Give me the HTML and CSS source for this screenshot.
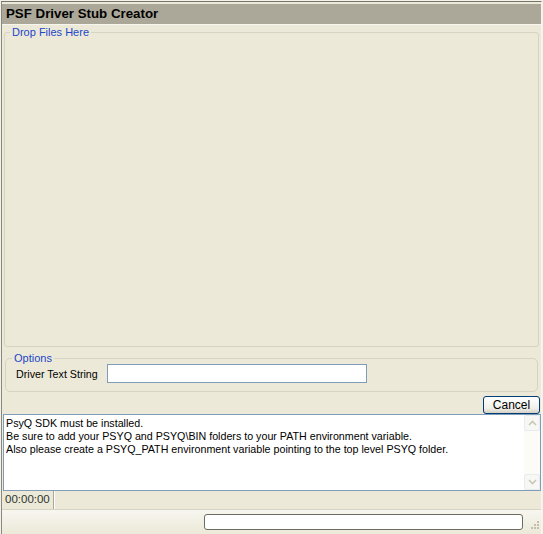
FILE: index.html
```html
<!DOCTYPE html>
<html>
<head>
<meta charset="utf-8">
<link rel="stylesheet" href="styles.css">
</head>
<body>
<div class="window">
  <div class="titlebar">PSF Driver Stub Creator</div>
  <fieldset class="group drop">
    <legend class="legend drop-legend">Drop Files Here</legend>
  </fieldset>
  <fieldset class="group options">
    <legend class="legend opt-legend">Options</legend>
    <div class="opt-row">
      <label class="opt-label">Driver Text String</label>
      <div class="textbox"></div>
    </div>
  </fieldset>
  <div class="btn-row">
    <div class="btn">Cancel</div>
  </div>
  <div class="log">
    <div class="log-text">PsyQ SDK must be installed.<br>Be sure to add your PSYQ and PSYQ\BIN folders to your PATH environment variable.<br>Also please create a PSYQ_PATH environment variable pointing to the top level PSYQ folder.</div>
    <div class="scroll">
      <div class="sbtn"><svg width="9" height="6" viewBox="0 0 9 6"><path d="M1 5 L4.5 1.5 L8 5" fill="none" stroke="#c9c7ba" stroke-width="1.6"/></svg></div>
      <div class="strack"></div>
      <div class="sbtn"><svg width="9" height="6" viewBox="0 0 9 6"><path d="M1 1 L4.5 4.5 L8 1" fill="none" stroke="#c9c7ba" stroke-width="1.6"/></svg></div>
    </div>
  </div>
  <div class="status">
    <div class="panel time">00:00:00</div>
    <div class="panel fill"></div>
  </div>
  <div class="bottom">
    <div class="progress"></div>
    <svg class="grip" width="11" height="11" viewBox="0 0 11 11">
      <g fill="#c3bfa8">
        <rect x="8" y="0" width="2" height="2"/>
        <rect x="5" y="3" width="2" height="2"/><rect x="8" y="3" width="2" height="2"/>
        <rect x="2" y="6" width="2" height="2"/><rect x="5" y="6" width="2" height="2"/><rect x="8" y="6" width="2" height="2"/>
      </g>
    </svg>
  </div>
</div>
</body>
</html>
```

FILE: styles.css
```css
html, body {
  margin: 0;
  padding: 0;
}
body {
  width: 543px;
  height: 534px;
  background: #f3f2ea;
  font-family: "Liberation Sans", Arial, sans-serif;
  font-size: 11px;
  color: #000;
  overflow: hidden;
}
.window {
  margin: 1px 0 0 1px;
  width: 541px;
  height: 533px;
  box-sizing: border-box;
  border-left: 1px solid #8a887c;
  border-top: 1px solid #76746a;
  border-right: 1px solid #f7f6f1;
  background: #ece9d8;
  display: flex;
  flex-direction: column;
}
.titlebar {
  margin-top: 2px;
  height: 20px;
  line-height: 20px;
  background: #aca899;
  border-bottom: 1px solid #f6f5ee;
  padding-left: 4px;
  font-weight: bold;
  font-size: 13.3px;
  flex: none;
}
.group {
  margin: 0;
  padding: 0;
  border: 1px solid #d6d3c3;
  border-radius: 3px;
  min-width: 0;
}
.legend {
  padding: 0 2px;
  line-height: 12px;
  color: #2146c9;
  font-size: 11px;
}
.drop {
  margin: 1px 2px 0 2px;
  flex: 1;
}
.drop-legend { margin-left: 5px; }
.options {
  margin: 5px 3px 0 3px;
  height: 40px;
  box-sizing: border-box;
  flex: none;
  border-color: #d6d3c2;
  border-radius: 5px;
}
.opt-legend { margin-left: 6px; }
.opt-row {
  display: flex;
  align-items: center;
  padding-left: 10px;
}
.opt-label {
  width: 91px;
  flex: none;
  font-size: 10.7px;
}
.textbox {
  width: 258px;
  height: 17px;
  border: 1px solid #7f9db9;
  background: #fff;
}
.btn-row {
  display: flex;
  justify-content: flex-end;
  margin-top: 4px;
  padding-right: 1px;
  flex: none;
}
.btn {
  width: 55px;
  height: 16px;
  border: 1px solid #003c74;
  border-radius: 3px;
  background: linear-gradient(#ffffff, #f0f0ea 70%, #d6d0c5);
  text-align: center;
  line-height: 16px;
  font-size: 12px;
}
.log {
  margin-left: 1px;
  height: 77px;
  box-sizing: border-box;
  border: 1px solid #7f9db9;
  background: #fff;
  display: flex;
  flex: none;
}
.log-text {
  flex: 1;
  padding: 2px 0 0 2px;
  line-height: 13px;
  font-size: 10.7px;
}
.scroll {
  width: 16px;
  display: flex;
  flex-direction: column;
  background: #fbfbf8;
  flex: none;
}
.sbtn {
  height: 16px;
  box-sizing: border-box;
  border: 1px solid #e8ebef;
  border-radius: 2px;
  background: #f7f7f3;
  display: flex;
  align-items: center;
  justify-content: center;
}
.strack { flex: 1; }
.status {
  height: 18px;
  display: flex;
  flex: none;
  border-bottom: 1px solid #d8d4c2;
}
.panel {
  line-height: 17px;
}
.time {
  width: 48px;
  padding-left: 3px;
  border-right: 1px solid #aca899;
  box-shadow: 1px 0 0 #fff;
  color: #2e352e;
  font-size: 11.5px;
}
.fill { flex: 1; }
.bottom {
  height: 24px;
  flex: none;
  display: flex;
  align-items: flex-start;
  background: linear-gradient(#f7f6f0, #ece9d8);
  position: relative;
}
.progress {
  margin: 4px 0 0 202px;
  width: 317px;
  height: 14px;
  border: 1px solid #6b6b60;
  border-radius: 3px;
  background: #fff;
}
.grip {
  position: absolute;
  right: 1px;
  bottom: 2px;
}
```
